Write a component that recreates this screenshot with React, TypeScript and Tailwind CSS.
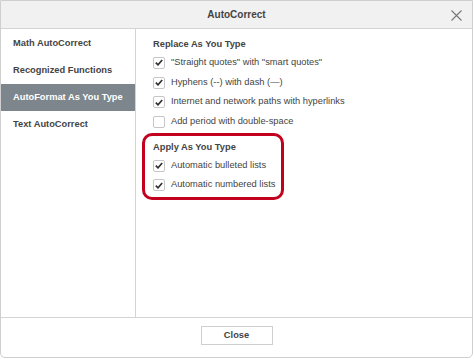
const font = { fontFamily: '"Liberation Sans", Arial, sans-serif' };

function Check({ checked }: { checked: boolean }) {
  return (
    <span className="flex h-[12px] w-[12px] shrink-0 items-center justify-center rounded-[2px] border border-[#c6c6c6] bg-white">
      {checked && (
        <svg width="8" height="7" viewBox="0 0 8 7">
          <path d="M0.8 3.6 L3 5.8 L7.2 1" fill="none" stroke="#333" strokeWidth="1.7" />
        </svg>
      )}
    </span>
  );
}

function Row({ label, checked = true }: { label: string; checked?: boolean }) {
  return (
    <div className="flex h-[19.7px] items-center gap-[6px] whitespace-nowrap text-[9.3px] text-[#444]">
      <Check checked={checked} />
      <span>{label}</span>
    </div>
  );
}

const tabs = ["Math AutoCorrect", "Recognized Functions", "AutoFormat As You Type", "Text AutoCorrect"];

export default function App() {
  return (
    <div className="h-[359px] w-[474px] bg-white" style={font}>
      <div className="flex h-[358px] w-[473px] flex-col overflow-hidden rounded-b-[5px] border border-[#cfcfcf] bg-white">
        <div className="relative flex h-[28px] shrink-0 items-center justify-center border-b border-[#d4d4d4] bg-[#f1f1f1]">
          <span className="text-[10px] font-bold text-[#444]">AutoCorrect</span>
          <svg className="absolute right-[10px] top-[9px]" width="11" height="11" viewBox="0 0 11 11">
            <path d="M0.5 0.5 L10.5 10.5 M10.5 0.5 L0.5 10.5" stroke="#777" strokeWidth="1.1" />
          </svg>
        </div>
        <div className="flex h-[288px] shrink-0">
          <div className="w-[135px] shrink-0 border-r border-[#d4d4d4] pt-[1px]">
            {tabs.map((t, i) => (
              <div
                key={t}
                className={
                  i === 2
                    ? "flex h-[27px] items-center whitespace-nowrap bg-[#7d868c] pl-[12px] text-[9.3px] font-bold text-white"
                    : "flex h-[27px] items-center whitespace-nowrap pl-[12px] text-[9.3px] font-bold text-[#444]"
                }
              >
                {t}
              </div>
            ))}
          </div>
          <div className="flex flex-col pl-[17px] pt-[9px]">
            <div className="flex h-[14px] items-center text-[9.3px] font-bold text-[#444]">Replace As You Type</div>
            <div className="mt-[1px]">
              <Row label={'"Straight quotes" with "smart quotes"'} />
              <Row label="Hyphens (--) with dash (—)" />
              <Row label="Internet and network paths with hyperlinks" />
              <Row label="Add period with double-space" checked={false} />
            </div>
            <div className="ml-[-11px] mt-[1px] h-[67px] w-[142px] rounded-[10px] border-[3px] border-[#c4001f] pl-[8px] pt-[5px]">
              <div className="flex h-[14px] items-center text-[9.3px] font-bold text-[#444]">Apply As You Type</div>
              <div className="mt-[1px]">
                <Row label="Automatic bulleted lists" />
                <Row label="Automatic numbered lists" />
              </div>
            </div>
          </div>
        </div>
        <div className="flex flex-1 items-center justify-center border-t border-[#d4d4d4]">
          <button className="mt-[-4px] h-[19px] w-[72px] border border-[#cfcfcf] bg-white text-[9.3px] font-bold text-[#444]">
            Close
          </button>
        </div>
      </div>
    </div>
  );
}
